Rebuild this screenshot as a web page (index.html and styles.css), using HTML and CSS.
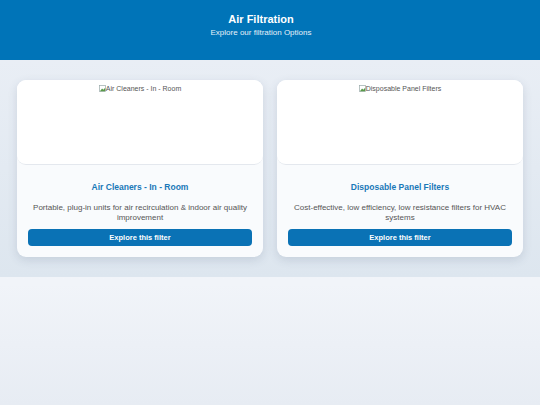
FILE: index.html
```html
<!DOCTYPE html>
<html>
<head>
<meta charset="utf-8">
<link rel="stylesheet" href="styles.css">
</head>
<body>
<header class="hero">
  <h1 class="hero-title">Air Filtration</h1>
  <p class="hero-sub">Explore our filtration Options</p>
</header>
<main class="catalog">
  <div class="grid">
    <article class="card">
      <div class="card-media">
        <span class="alt"><svg class="broken" viewBox="0 0 8 8" width="7" height="7"><rect x="0.5" y="0.5" width="7" height="7" fill="#fff" stroke="#9aa" stroke-width="0.8"/><path d="M1 7 L3.5 4 L5 5.5 L7 3 L7 7 Z" fill="#5a9a4a"/></svg>Air Cleaners - In - Room</span>
      </div>
      <div class="card-body">
        <h2 class="card-title">Air Cleaners - In - Room</h2>
        <p class="card-text">Portable, plug-in units for air recirculation &amp; indoor air quality improvement</p>
        <a class="btn">Explore this filter</a>
      </div>
    </article>
    <article class="card">
      <div class="card-media">
        <span class="alt"><svg class="broken" viewBox="0 0 8 8" width="7" height="7"><rect x="0.5" y="0.5" width="7" height="7" fill="#fff" stroke="#9aa" stroke-width="0.8"/><path d="M1 7 L3.5 4 L5 5.5 L7 3 L7 7 Z" fill="#5a9a4a"/></svg>Disposable Panel Filters</span>
      </div>
      <div class="card-body">
        <h2 class="card-title">Disposable Panel Filters</h2>
        <p class="card-text">Cost-effective, low efficiency, low resistance filters for HVAC systems</p>
        <a class="btn">Explore this filter</a>
      </div>
    </article>
  </div>
</main>
</body>
</html>
```
FILE: styles.css
```css
* { box-sizing: border-box; }
html {
  min-height: 100%;
  background: linear-gradient(180deg, #f3f6fa 0%, #f1f4f9 70%, #e7ecf3 100%);
}
body {
  margin: 0;
  font-family: "Liberation Sans", Arial, sans-serif;
  color: #444;
}
.hero {
  background: #0074b8;
  color: #fff;
  text-align: center;
  height: 60px;
  padding: 13px 18px 0 0;
}
.hero-title {
  margin: 0;
  font-size: 11px;
  font-weight: bold;
  line-height: 13px;
}
.hero-sub {
  margin: 2px 0 0;
  font-size: 8px;
  line-height: 10px;
  color: #e6f0f8;
}
.catalog {
  background: linear-gradient(180deg, #e9eef5 0%, #dde6ef 100%);
  padding: 20px 17px 20px;
}
.grid {
  display: grid;
  grid-template-columns: 1fr 1fr;
  gap: 14px;
}
.card {
  background: #f9fbfd;
  border-radius: 9px;
  overflow: hidden;
  box-shadow: 0 3px 10px rgba(60, 80, 110, 0.16);
}
.card-media {
  background: #fff;
  height: 85px;
  border-bottom: 1px solid #e4e8ee;
  border-radius: 0 0 9px 9px;
  display: flex;
  justify-content: center;
  align-items: flex-start;
  padding-top: 4px;
}
.alt {
  font-size: 7px;
  line-height: 9px;
  color: #555;
  display: flex;
  align-items: center;
}
.card-body {
  padding: 17px 11px 11px;
  text-align: center;
}
.card-title {
  margin: 0;
  font-size: 8.5px;
  line-height: 10px;
  font-weight: bold;
  color: #1a78b8;
}
.card-text {
  margin: 11px 0 7px;
  font-size: 8px;
  line-height: 9.5px;
  color: #555;
}
.btn {
  display: block;
  height: 17px;
  line-height: 17px;
  background: #0a72b5;
  color: #fff;
  border-radius: 4px;
  font-size: 7.5px;
  font-weight: bold;
}
```
